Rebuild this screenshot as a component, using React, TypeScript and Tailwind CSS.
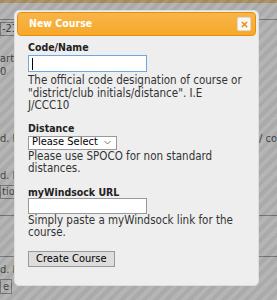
import { X } from "lucide-react";

const font = "font-['DejaVu_Sans_Condensed','DejaVu_Sans',Verdana,sans-serif] [font-stretch:condensed]";

function PageBehind(): JSX.Element {
  return (
    <div className={`h-[300px] w-[277px] overflow-hidden bg-white text-[11px] text-[#222] ${font}`}>
      <div className="h-[3px] bg-[#f4bd68]" />
      <div className="flex h-[17px] items-end border-b border-[#888]" />
      <div className="mt-[2px] flex h-[14px] items-center">
        <span className="border border-[#888] px-[1px] leading-[12px]">-23</span>
      </div>
      <div className="mt-[17px] h-[12px] leading-[12px]">art</div>
      <div className="h-[13px] leading-[13px]">0</div>
      <div className="mt-[54px] flex h-[13px] justify-between leading-[13px]">
        <span>d. l</span>
        <span>/ co</span>
      </div>
      <div className="mt-[24px] h-[13px] leading-[13px]">d. L</div>
      <div className="mt-[3px] flex h-[14px] items-center">
        <span className="border border-[#888] px-[1px] leading-[12px]">tion</span>
      </div>
      <div className="mt-[16px] border-t border-[#888]" />
      <div className="mt-[40px] border-t border-[#888]" />
      <div className="mt-[6px] h-[13px] leading-[13px]">d. F</div>
      <div className="mt-[3px]">
        <span className="border border-[#888] px-[2px] leading-[14px]">e</span>
      </div>
    </div>
  );
}

export default function App(): JSX.Element {
  return (
    <div className="relative h-[300px] w-[277px] overflow-hidden">
      <PageBehind />
      <div className="absolute inset-0 bg-[repeating-linear-gradient(135deg,#555_0px,#555_4px,#6b6b6b_4px,#6b6b6b_8px)] opacity-50" />

      <div
        className={`absolute left-[14px] top-[10px] flex h-[276px] w-[245px] flex-col rounded-[5px] border border-[#dddddd] bg-[#eeeeee] px-[2px] pt-[1px] text-[#333] ${font}`}
      >
        <div className="flex h-[24px] items-center justify-between rounded-[4px] border border-[#e78f08] bg-gradient-to-b from-[#f8b548] to-[#f6a828] pl-[11px] pr-[4px]">
          <span className="text-[10.5px] font-bold text-white">New Course</span>
          <button className="flex h-[14px] w-[14px] items-center justify-center rounded-[2px] border border-[#ddd] bg-[#f7f7f7]">
            <X className="h-[9px] w-[9px] text-[#ef8c08]" strokeWidth={4} />
          </button>
        </div>

        <div className="flex flex-col px-[11px] pt-[5px] text-[11.5px] leading-[12.5px]">
          <label className="text-[10.5px] font-bold leading-[13px] text-[#222]">Code/Name</label>
          <div className="mt-[1px] flex h-[17px] w-[119px] items-center border border-[#6fa8dc] bg-white pl-[3px]">
            <span className="h-[12px] w-[1px] bg-black" />
          </div>
          <p className="mt-[2px]">
            The official code designation of course or "district/club initials/distance". I.E J/CCC10
          </p>

          <label className="mt-[10px] text-[10.5px] font-bold leading-[13px] text-[#222]">Distance</label>
          <div className="mt-[1px] flex h-[14px] w-[89px] items-center justify-between whitespace-nowrap border border-[#999] bg-white pl-[3px] pr-[5px] text-[11px] text-black">
            <span>Please Select</span>
            <svg width="7" height="5" viewBox="0 0 7 5" fill="none">
              <path d="M0.5 1L3.5 4L6.5 1" stroke="#777" strokeWidth="1" />
            </svg>
          </div>
          <p>Please use SPOCO for non standard distances.</p>

          <label className="mt-[11px] text-[10.5px] font-bold leading-[12px] text-[#222]">myWindsock URL</label>
          <div className="h-[16px] w-[119px] border border-[#999] bg-white" />
          <p>Simply paste a myWindsock link for the course.</p>

          <div className="mt-[12px]">
            <button className="h-[16px] border border-[#999] bg-[#dddddd] px-[7px] text-[11px] leading-[14px] text-black">
              Create Course
            </button>
          </div>
        </div>
      </div>
    </div>
  );
}
